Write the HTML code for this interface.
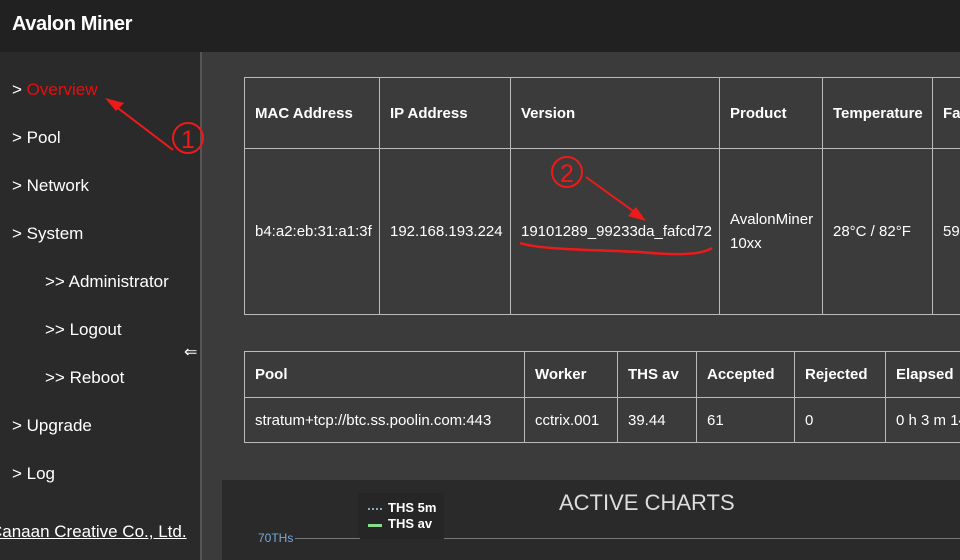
<!DOCTYPE html>
<html><head><meta charset="utf-8"><style>
body{margin:0;width:960px;height:560px;overflow:hidden;background:#3b3b3b;font-family:"Liberation Sans",Arial,sans-serif;color:#fff;position:relative}
.hdr{position:absolute;left:0;top:0;width:960px;height:52px;background:#212121}
.hdr span{position:absolute;left:12px;top:13px;font-size:20px;font-weight:bold;letter-spacing:-0.4px}
.side{position:absolute;left:0;top:52px;width:200px;height:508px;background:#2a2a2a;border-right:2px solid #555}
.n{position:absolute;font-size:17px;white-space:nowrap}
table{position:absolute;border-collapse:collapse;font-size:15px}
td{border:1px solid #bbb;padding:0 0 0 10px;vertical-align:middle;white-space:nowrap}
th{border:1px solid #bbb;padding:0 0 0 10px;text-align:left;font-weight:bold;white-space:nowrap}
.chart{position:absolute;left:222px;top:480px;width:738px;height:80px;background:#2a2a2a}
</style></head><body>
<div class="hdr"><span>Avalon Miner</span></div>
<div class="side">
<div class="n" style="left:12px;top:28px">&gt; <span style="color:#e41010">Overview</span></div>
<div class="n" style="left:12px;top:76px">&gt; Pool</div>
<div class="n" style="left:12px;top:124px">&gt; Network</div>
<div class="n" style="left:12px;top:172px">&gt; System</div>
<div class="n" style="left:45px;top:220px">&gt;&gt; Administrator</div>
<div class="n" style="left:45px;top:268px">&gt;&gt; Logout</div>
<div class="n" style="left:45px;top:316px">&gt;&gt; Reboot</div>
<div class="n" style="left:12px;top:364px">&gt; Upgrade</div>
<div class="n" style="left:12px;top:412px">&gt; Log</div>
<div class="n" style="left:-10px;top:470px;text-decoration:underline">Canaan Creative Co., Ltd.</div>
<div class="n" style="left:184px;top:290px;font-size:16px">⇐</div>
</div>
<table style="left:244px;top:77px;width:760px">
<tr style="height:71px"><th style="width:124px">MAC Address</th><th style="width:120px">IP Address</th><th style="width:198px">Version</th><th style="width:92px">Product</th><th style="width:99px">Temperature</th><th>Fan</th></tr>
<tr style="height:166px"><td>b4:a2:eb:31:a1:3f</td><td>192.168.193.224</td><td>19101289_99233da_fafcd72</td><td style="line-height:24px">AvalonMiner<br>10xx</td><td>28°C / 82°F</td><td>5940</td></tr>
</table>
<table style="left:244px;top:351px;width:760px">
<tr style="height:46px"><th style="width:269px">Pool</th><th style="width:82px">Worker</th><th style="width:68px">THS av</th><th style="width:87px">Accepted</th><th style="width:80px">Rejected</th><th>Elapsed</th></tr>
<tr style="height:45px"><td>stratum+tcp://btc.ss.poolin.com:443</td><td>cctrix.001</td><td>39.44</td><td>61</td><td>0</td><td>0 h 3 m 14 s</td></tr>
</table>
<div class="chart">
<div style="position:absolute;left:337px;top:10px;font-size:22px;color:#ddd">ACTIVE CHARTS</div>
<div style="position:absolute;left:136px;top:13px;width:86px;height:46px;background:#262626"></div>
<div style="position:absolute;left:146px;top:28px;width:14px;border-top:2px dotted #8ab"></div>
<div style="position:absolute;left:166px;top:20px;font-size:13px;font-weight:bold">THS 5m</div>
<div style="position:absolute;left:146px;top:44px;width:14px;border-top:3px solid #8d8"></div>
<div style="position:absolute;left:166px;top:36px;font-size:13px;font-weight:bold">THS av</div>
<div style="position:absolute;left:36px;top:51px;font-size:12px;color:#7aa7d8">70THs</div>
<div style="position:absolute;left:73px;top:58px;width:65px;border-top:1px solid #777"></div>
<div style="position:absolute;left:222px;top:58px;width:516px;border-top:1px solid #777"></div>
</div>
<svg style="position:absolute;left:0;top:0" width="960" height="560">
<g stroke="#ee1a1a" fill="none" stroke-width="2">
<circle cx="188" cy="138" r="15"/>
<line x1="173" y1="150" x2="110" y2="102"/>
<circle cx="567" cy="172" r="15"/>
<line x1="586" y1="177" x2="640" y2="216"/>
<path d="M520 243 C540 250 600 250 640 252 C670 255 700 256 712 248" stroke-width="2.5"/>
</g>
<polygon points="105,98 124,103 116,111" fill="#ee1a1a"/>
<polygon points="646,221 628,216 636,207" fill="#ee1a1a"/>
<text x="188" y="148" fill="#ee1a1a" font-size="25" text-anchor="middle" font-family="Liberation Sans">1</text>
<text x="567" y="182" fill="#ee1a1a" font-size="25" text-anchor="middle" font-family="Liberation Sans">2</text>
</svg>
</body></html>
